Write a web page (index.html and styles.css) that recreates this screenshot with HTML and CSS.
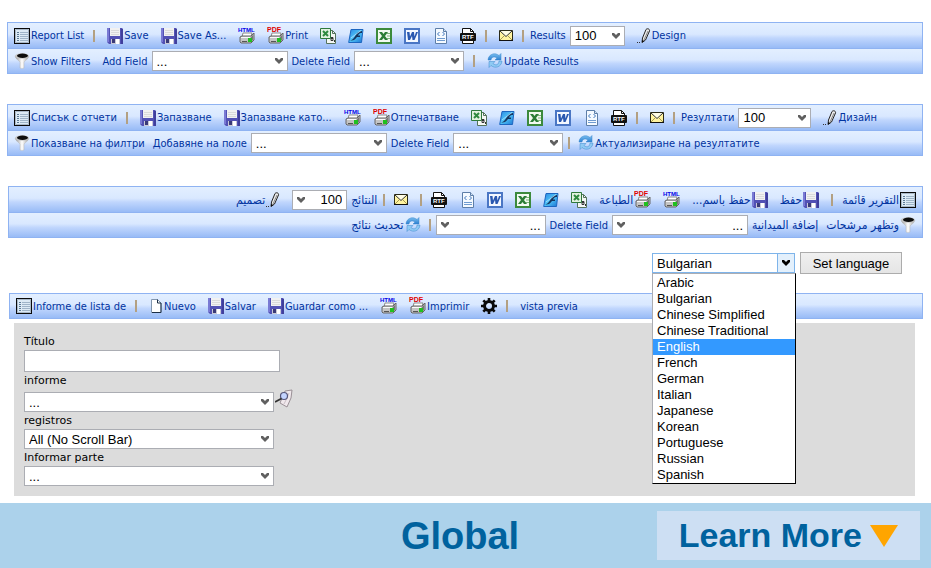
FILE: index.html
```html
<!DOCTYPE html>
<html lang="en">
<head>
<meta charset="utf-8">
<title>Global</title>
<link rel="stylesheet" href="styles.css">
</head>
<body>
<svg class="sprite" aria-hidden="true">
  <defs>
    <linearGradient id="g-refresh" x1="0" y1="0" x2="0" y2="1"><stop offset="0" stop-color="#7cc0f0"/><stop offset="1" stop-color="#2a7fd0"/></linearGradient>
    <linearGradient id="g-blue" x1="0" y1="0" x2="1" y2="1"><stop offset="0" stop-color="#2a86e0"/><stop offset=".5" stop-color="#4fc3f7"/><stop offset="1" stop-color="#1a70d0"/></linearGradient>
    <linearGradient id="g-funnel" x1="0" y1="0" x2="1" y2="0"><stop offset="0" stop-color="#8c8c8c"/><stop offset=".5" stop-color="#fff"/><stop offset="1" stop-color="#9a9a9a"/></linearGradient>
  </defs>
  <symbol id="list" viewBox="0 0 16 16">
    <rect x=".5" y=".5" width="15" height="15" fill="#dceaf5" stroke="#0a0a0a"/>
    <path d="M1.500 1.500h13v13h-13z" fill="none" stroke="#a9b8c8"/>
    <path d="M3 4.500h2M3 6.500h2M3 8.500h2M3 10.500h2M3 12.500h2" stroke="#5d7a96"/>
    <path d="M6 4.500h8M6 6.500h8M6 8.500h8M6 10.500h8M6 12.500h8" stroke="#9fb4c8"/>
  </symbol>
  <symbol id="floppy" viewBox="0 0 16 16">
    <path d="M0 0h15l1 1v15H2l-2-2z" fill="#5251b4"/>
    <path d="M0 0h2v14H0z" fill="#7a7ad4"/>
    <path d="M14 1h2v15h-2z" fill="#403f9c"/>
    <path d="M3 0h10v8H3z" fill="#f1f1f1"/>
    <path d="M4 2.500h8M4 4.500h8M4 6.500h8" stroke="#dadada"/>
    <path d="M4 11h9v5H4z" fill="#c9c9d6"/>
    <path d="M5 11h3v4H5z" fill="#3a3a78"/>
    <path d="M9 11h3v5H9z" fill="#fff"/>
  </symbol>
  <symbol id="print-html" viewBox="0 0 17 20">
    <path d="M5 7h9l-1 4H4z" fill="#fff" stroke="#8a8a8a"/>
    <path d="M2 11l2-1h9l3-3v7l-3 3H3l-1-1z" fill="#c4c4c4" stroke="#666"/>
    <path d="M3 11.500h9" stroke="#fafafa"/>
    <path d="M13 11l2-2v5l-2 2z" fill="#777"/>
    <path d="M4 15.500h5" stroke="#555"/>
    <path d="M10 12h4v4h-4z" fill="#1fc01f"/>
    <text class="tag tag-html" x="0" y="6">HTML</text>
  </symbol>
  <symbol id="print-pdf" viewBox="0 0 17 20">
    <path d="M5 7h9l-1 4H4z" fill="#fff" stroke="#8a8a8a"/>
    <path d="M2 11l2-1h9l3-3v7l-3 3H3l-1-1z" fill="#c4c4c4" stroke="#666"/>
    <path d="M3 11.500h9" stroke="#fafafa"/>
    <path d="M13 11l2-2v5l-2 2z" fill="#777"/>
    <path d="M4 15.500h5" stroke="#555"/>
    <path d="M10 12h4v4h-4z" fill="#1fc01f"/>
    <text class="tag tag-pdf" x="0" y="6">PDF</text>
  </symbol>
  <symbol id="csv" viewBox="0 0 16 16">
    <path d="M6.500 2.500h6l3 3v10h-9z" fill="#f5f8f5" stroke="#54735c"/>
    <path d="M12.500 2.500v3h3" fill="none" stroke="#54735c"/>
    <path d="M.5.500h10v10H.5z" fill="#e3f2e0" stroke="#2f7a3c"/>
    <path d="M3 3l5 5M8 3L3 8" stroke="#2f8a3e" stroke-width="2"/>
    <path d="M11 9.500h2v3h-2v-2h2M14.500 12v2" fill="none" stroke="#333"/>
  </symbol>
  <symbol id="flash" viewBox="0 0 16 16">
    <path d="M3 1.500h12l-1.500 13H.7z" fill="url(#g-blue)" stroke="#1c66c0"/>
    <path d="M14 3C9 3.500 8.500 6 7 8.500S4 12 2 12.500c4 .5 5.500-1.500 7-3.500h3V7.500h-2C11 5.500 12 5 14 5z" fill="#16365f"/>
    <path d="M3 10L13 2.500" stroke="#b9e6ff" stroke-width=".8"/>
  </symbol>
  <symbol id="excel" viewBox="0 0 16 16">
    <path d="M1 1h14v14H1z" fill="#f2faf0" stroke="#3c8a3c" stroke-width="2"/>
    <path d="M11 5.500h3M11 8h3M11 10.500h3" stroke="#7fb57b"/>
    <path d="M3 4h3l6 8H9zM9 4h3l-6 8H3z" fill="#2c7d35"/>
  </symbol>
  <symbol id="word" viewBox="0 0 16 16">
    <path d="M1 1h14v14H1z" fill="#f4f8ff" stroke="#4a76c4" stroke-width="2"/>
    <path d="M3 4h2.500l.5 4.500L8 4h2l.5 4.500L12 4h2l-3.500 8h-2L8 8l-2 4H4z" fill="#2a58b0"/>
  </symbol>
  <symbol id="xml" viewBox="0 0 16 16">
    <path d="M3.500.500h8l3 3v12h-11z" fill="#f5faff" stroke="#5d7ea8"/>
    <path d="M11.500.500v3h3" fill="#cfe0f2" stroke="#5d7ea8"/>
    <path d="M7.500 4l-2 2 2 2M10.500 4l2 2-2 2" fill="none" stroke="#3d75bd"/>
    <path d="M5 10.500h8M5 12.500h8" stroke="#6f9bd0"/>
  </symbol>
  <symbol id="rtf" viewBox="0 0 16 16">
    <path d="M2.500 6V.500h8l3 3V6M2.500 12v3.500h11V12" fill="#fff" stroke="#111"/>
    <path d="M10.500.500v3h3" fill="none" stroke="#111"/>
    <rect x="0" y="5" width="16" height="8" rx="1" fill="#111"/>
    <text class="tag tag-rtf" x="2" y="11">RTF</text>
  </symbol>
  <symbol id="mail" viewBox="0 0 14 16">
    <path d="M.5 2.500h13v10H.5z" fill="#fff3a0" stroke="#2a2a18"/>
    <path d="M1 12l4-4M13 12L9 8" stroke="#a59a50"/>
    <path d="M1 3l6 5.500L13 3" fill="#fffde6" stroke="#333"/>
    <path d="M0 12.500h14" stroke="#111"/>
  </symbol>
  <symbol id="pencil" viewBox="0 0 14 16">
    <path d="M9 1.500c1.500-1.500 4-.5 3.500 1.500L8.500 12 5 14.500 5.500 10z" fill="#ececec" stroke="#222"/>
    <path d="M11 3L7 12" stroke="#888"/>
    <path d="M5 12v2.500L7.500 13z" fill="#111"/>
    <path d="M0 14.500h1M2 14.500h1" stroke="#333"/>
  </symbol>
  <symbol id="funnel" viewBox="0 0 16 16">
    <path d="M1 3C2 7 5.500 7 6 9.500V15q2 1 4 0V9.500C10.500 7 14 7 15 3z" fill="url(#g-funnel)" stroke="#b0b0b0" stroke-width=".4"/>
    <ellipse cx="8" cy="3" rx="7" ry="2.800" fill="#c8c8c8"/>
    <ellipse cx="8.500" cy="2.800" rx="5.500" ry="2.200" fill="#0d0d0d"/>
  </symbol>
  <symbol id="refresh" viewBox="0 0 16 16">
    <path d="M1 7C1.500 1 8-1 12 2.500l2-2V7H8l2-2C7 3 4.500 4 4 7z" fill="url(#g-refresh)" stroke="#3a87cc" stroke-width=".5"/>
    <path d="M15 8c-.5 6-7 8-11 4.500l-2 2V8.500h6l-2 2C9 13 11.500 12 12 8z" fill="#8fcaf3" stroke="#3a87cc" stroke-width=".5"/>
  </symbol>
  <symbol id="page" viewBox="0 0 12 16">
    <path d="M1.500 1.500h6L11 5v9.500H1.500z" fill="#fff" stroke="#8296ae"/>
    <path d="M7.500 1.500V5H11M11 5v9.500H2" fill="none" stroke="#1b2e45"/>
  </symbol>
  <symbol id="gear" viewBox="0 0 16 16">
    <circle cx="8" cy="8" r="4.500" fill="none" stroke="#0a0a0a" stroke-width="3"/>
    <path d="M8 0v3M8 13v3M0 8h3M13 8h3M2.300 2.300l2.200 2.200M11.500 11.500l2.200 2.200M13.700 2.300l-2.200 2.200M4.500 11.500l-2.200 2.200" stroke="#0a0a0a" stroke-width="2.600"/>
  </symbol>
  <symbol id="preview" viewBox="0 0 18 20">
    <path d="M10 2l7-1-1 8-4 9-7-4z" fill="#f0e8ec" stroke="#9a9096"/>
    <path d="M14 4l-2 5-3 6" fill="none" stroke="#cbbfc6"/>
    <circle cx="9" cy="7" r="3.500" fill="#c4d4ff" stroke="#55557a" stroke-width="1.200"/>
    <path d="M6.500 9.500L0 13" stroke="#333" stroke-width="1.800"/>
  </symbol>
</svg>

<main class="page">
  <section class="toolbar" aria-label="English toolbar">
    <div class="row">
      <a class="item" href="#"><svg class="icon"><use href="#list"/></svg>Report List</a>
      <span class="sep"></span>
      <a class="item" href="#"><svg class="icon"><use href="#floppy"/></svg>Save</a>
      <a class="item" href="#"><svg class="icon"><use href="#floppy"/></svg>Save As...</a>
      <a class="item" href="#"><svg class="icon tall"><use href="#print-html"/></svg></a>
      <a class="item" href="#"><svg class="icon tall"><use href="#print-pdf"/></svg>Print</a>
      <a class="item" href="#"><svg class="icon"><use href="#csv"/></svg></a>
      <a class="item" href="#"><svg class="icon"><use href="#flash"/></svg></a>
      <a class="item" href="#"><svg class="icon"><use href="#excel"/></svg></a>
      <a class="item" href="#"><svg class="icon"><use href="#word"/></svg></a>
      <a class="item" href="#"><svg class="icon"><use href="#xml"/></svg></a>
      <a class="item" href="#"><svg class="icon"><use href="#rtf"/></svg></a>
      <span class="sep"></span>
      <a class="item" href="#"><svg class="icon narrow"><use href="#mail"/></svg></a>
      <span class="sep"></span>
      <span class="field after-sep"><label for="en-results">Results</label><select id="en-results" class="select count"><option>100</option></select></span>
      <a class="item" href="#"><svg class="icon narrow"><use href="#pencil"/></svg>Design</a>
    </div>
    <div class="row">
      <a class="item" href="#"><svg class="icon"><use href="#funnel"/></svg>Show Filters</a>
      <span class="field"><label for="en-add">Add Field</label><select id="en-add" class="select wide"><option>...</option></select>
      <label for="en-del">Delete Field</label><select id="en-del" class="select"><option>...</option></select></span>
      <span class="sep"></span>
      <a class="item" href="#"><svg class="icon"><use href="#refresh"/></svg>Update Results</a>
    </div>
  </section>

  <section class="toolbar" lang="bg" aria-label="Bulgarian toolbar">
    <div class="row">
      <a class="item" href="#"><svg class="icon"><use href="#list"/></svg>Списък с отчети</a>
      <span class="sep"></span>
      <a class="item" href="#"><svg class="icon"><use href="#floppy"/></svg>Запазване</a>
      <a class="item" href="#"><svg class="icon"><use href="#floppy"/></svg>Запазване като...</a>
      <a class="item" href="#"><svg class="icon tall"><use href="#print-html"/></svg></a>
      <a class="item" href="#"><svg class="icon tall"><use href="#print-pdf"/></svg>Отпечатване</a>
      <a class="item" href="#"><svg class="icon"><use href="#csv"/></svg></a>
      <a class="item" href="#"><svg class="icon"><use href="#flash"/></svg></a>
      <a class="item" href="#"><svg class="icon"><use href="#excel"/></svg></a>
      <a class="item" href="#"><svg class="icon"><use href="#word"/></svg></a>
      <a class="item" href="#"><svg class="icon"><use href="#xml"/></svg></a>
      <a class="item" href="#"><svg class="icon"><use href="#rtf"/></svg></a>
      <span class="sep"></span>
      <a class="item" href="#"><svg class="icon narrow"><use href="#mail"/></svg></a>
      <span class="sep"></span>
      <span class="field after-sep"><label for="bg-results">Резултати</label><select id="bg-results" class="select count roomy"><option>100</option></select></span>
      <a class="item" href="#"><svg class="icon narrow"><use href="#pencil"/></svg>Дизайн</a>
    </div>
    <div class="row compact">
      <a class="item" href="#"><svg class="icon"><use href="#funnel"/></svg>Показване на филтри</a>
      <span class="field"><label for="bg-add">Добавяне на поле</label><select id="bg-add" class="select wide"><option>...</option></select>
      <label for="bg-del">Delete Field</label><select id="bg-del" class="select"><option>...</option></select></span>
      <span class="sep"></span>
      <a class="item" href="#"><svg class="icon"><use href="#refresh"/></svg>Актуализиране на резултатите</a>
    </div>
  </section>

  <section class="toolbar" lang="ar" dir="rtl" aria-label="Arabic toolbar">
    <div class="row">
      <a class="item" href="#"><svg class="icon"><use href="#list"/></svg>التقرير قائمة</a>
      <span class="sep"></span>
      <a class="item" href="#"><svg class="icon"><use href="#floppy"/></svg>حفظ</a>
      <a class="item" href="#"><svg class="icon"><use href="#floppy"/></svg>حفظ باسم...</a>
      <a class="item" href="#"><svg class="icon tall"><use href="#print-html"/></svg></a>
      <a class="item" href="#"><svg class="icon tall"><use href="#print-pdf"/></svg>الطباعة</a>
      <a class="item" href="#"><svg class="icon"><use href="#csv"/></svg></a>
      <a class="item" href="#"><svg class="icon"><use href="#flash"/></svg></a>
      <a class="item" href="#"><svg class="icon"><use href="#excel"/></svg></a>
      <a class="item" href="#"><svg class="icon"><use href="#word"/></svg></a>
      <a class="item" href="#"><svg class="icon"><use href="#xml"/></svg></a>
      <a class="item" href="#"><svg class="icon"><use href="#rtf"/></svg></a>
      <span class="sep"></span>
      <a class="item" href="#"><svg class="icon narrow"><use href="#mail"/></svg></a>
      <span class="sep"></span>
      <span class="field after-sep"><label for="ar-results">النتائج</label><select id="ar-results" class="select count"><option>100</option></select></span>
      <a class="item" href="#"><svg class="icon narrow"><use href="#pencil"/></svg>تصميم</a>
    </div>
    <div class="row compact">
      <a class="item" href="#"><svg class="icon"><use href="#funnel"/></svg>وتظهر مرشحات</a>
      <span class="field"><label for="ar-add">إضافة الميدانية</label><select id="ar-add" class="select wide"><option>...</option></select>
      <label for="ar-del" class="latin" lang="en">Delete Field</label><select id="ar-del" class="select"><option>...</option></select></span>
      <span class="sep"></span>
      <a class="item" href="#"><svg class="icon"><use href="#refresh"/></svg>تحديث نتائج</a>
    </div>
  </section>

  <div class="language">
    <div class="picker">
      <select class="select active" aria-label="Language"><option>Bulgarian</option></select>
      <ul class="menu" role="listbox" aria-label="Languages">
        <li role="option">Arabic</li>
        <li role="option">Bulgarian</li>
        <li role="option">Chinese Simplified</li>
        <li role="option">Chinese Traditional</li>
        <li role="option" class="chosen" aria-selected="true">English</li>
        <li role="option">French</li>
        <li role="option">German</li>
        <li role="option">Italian</li>
        <li role="option">Japanese</li>
        <li role="option">Korean</li>
        <li role="option">Portuguese</li>
        <li role="option">Russian</li>
        <li role="option">Spanish</li>
      </ul>
    </div>
    <button class="set" type="button">Set language</button>
  </div>

  <section class="toolbar designer" lang="es" aria-label="Spanish toolbar">
    <div class="row">
      <a class="item" href="#"><svg class="icon"><use href="#list"/></svg>Informe de lista de</a>
      <span class="sep"></span>
      <a class="item" href="#"><svg class="icon narrow"><use href="#page"/></svg>Nuevo</a>
      <a class="item" href="#"><svg class="icon"><use href="#floppy"/></svg>Salvar</a>
      <a class="item" href="#"><svg class="icon"><use href="#floppy"/></svg>Guardar como ...</a>
      <a class="item" href="#"><svg class="icon tall"><use href="#print-html"/></svg></a>
      <a class="item" href="#"><svg class="icon tall"><use href="#print-pdf"/></svg>Imprimir</a>
      <a class="item" href="#"><svg class="icon"><use href="#gear"/></svg></a>
      <span class="sep"></span>
      <a class="item" href="#">vista previa</a>
    </div>
  </section>

  <form class="form" lang="es">
    <label for="titulo">Título</label>
    <input id="titulo" class="text" type="text">
    <label for="informe">informe</label>
    <div class="with-icon">
      <select id="informe" class="select"><option>...</option></select>
      <svg class="preview"><use href="#preview"/></svg>
    </div>
    <label for="registros">registros</label>
    <select id="registros" class="select"><option>All (No Scroll Bar)</option></select>
    <label for="parte">Informar parte</label>
    <select id="parte" class="select"><option>...</option></select>
  </form>
</main>

<footer class="footer">
  <h1 class="title">Global</h1>
  <a class="more" href="#">Learn More<svg class="arrow" viewBox="0 0 28 22"><path d="M0 0h28L14 22z" fill="#ffa500"/></svg></a>
</footer>
</body>
</html>
```
FILE: styles.css
```css
* {
  box-sizing: border-box;
}

body {
  margin: 0;
  background: #fff;
  color: #000;
  font-family: "Liberation Sans", Arial, sans-serif;
  font-size: 13px;
}

.sprite {
  position: absolute;
  width: 20px;
  height: 20px;
  visibility: hidden;
}

.page {
  padding: 22px 8px 7px 7px;
}

/* Toolbars */
.toolbar {
  margin-bottom: 30px;
  border: solid #8fb3f2;
  border-width: 0 1px;
  color: #0033a0;
  font-family: "DejaVu Sans Condensed", "DejaVu Sans", Tahoma, sans-serif;
  font-size: 11px;
}

.toolbar[dir="rtl"] {
  margin: 0 0 14px 1px;
  font-size: 12px;
}

.toolbar.designer {
  margin: 19px 0 4px 2px;
}

.latin {
  font-size: 11px;
}

.row {
  display: flex;
  align-items: center;
  gap: 12px;
  height: 26px;
  padding: 0 6px;
  border-top: 1px solid #8fb3f2;
  background: linear-gradient(#e3efff, #d9e8ff 45%, #c0d6fd 60%, #98bbf6);
  white-space: nowrap;
}

.row:last-child {
  border-bottom: 1px solid #8fb3f2;
}

.row.compact {
  gap: 8px;
}

.item {
  display: flex;
  align-items: center;
  gap: 1px;
  color: inherit;
  text-decoration: none;
}

.field {
  display: flex;
  align-items: center;
  gap: 4px;
}

.sep {
  width: 2px;
  height: 12px;
  margin-inline-start: -3px;
  background: #b3a082;
}

.after-sep {
  margin-inline-start: -6px;
}

.icon {
  width: 16px;
  height: 16px;
  direction: ltr;
}

.icon.tall {
  width: 17px;
  height: 20px;
}

.icon.narrow {
  width: 14px;
}

.tag {
  font-family: "Liberation Sans", Arial, sans-serif;
  font-size: 6px;
  font-weight: bold;
}

.tag-html {
  fill: #0000e6;
}

.tag-pdf {
  fill: #e00000;
  font-size: 7px;
}

.tag-rtf {
  fill: #fff;
}

/* Form controls */
.select {
  appearance: none;
  width: 110px;
  height: 20px;
  padding: 0 4px;
  border: 1px solid #abadb3;
  border-radius: 0;
  background: #fff url("data:image/svg+xml,%3Csvg xmlns='http://www.w3.org/2000/svg' width='8' height='6'%3E%3Cpath d='M0 0h2l2 2 2-2h2v2L4 6 0 2z' fill='%23606060'/%3E%3C/svg%3E") no-repeat right 4px center;
  color: #000;
  font: 13px "Liberation Sans", Arial, sans-serif;
}

[dir="rtl"] .select {
  background-position: left 4px center;
}

.select.wide {
  width: 136px;
}

.select.count {
  width: 55px;
}

.select.roomy {
  width: 73px;
}

/* Language picker */
.language {
  display: flex;
  justify-content: flex-end;
  align-items: center;
  gap: 5px;
  padding-right: 21px;
}

.picker {
  position: relative;
  width: 143px;
}

.select.active {
  display: block;
  width: 100%;
  border-color: #7eb4ea;
  background: url("data:image/svg+xml,%3Csvg xmlns='http://www.w3.org/2000/svg' width='17' height='18'%3E%3Cpath d='M0 0h17v18H0z' fill='%23e3f0fc'/%3E%3Cpath d='M.5 0v18' stroke='%237eb4ea'/%3E%3Cpath d='M5 6h2l2 2 2-2h2v2l-4 4-4-4z' fill='%23000'/%3E%3C/svg%3E") no-repeat right center #fff;
}

.menu {
  position: absolute;
  z-index: 1;
  top: 100%;
  left: 0;
  width: 144px;
  margin: 0;
  padding: 1px 0 0;
  border: 1px solid #000;
  border-top-color: #abadb3;
  border-left-color: #abadb3;
  background: #fff;
  list-style: none;
  line-height: 16px;
}

.menu li {
  padding: 0 4px;
}

.menu .chosen {
  background: #3399ff;
  color: #fff;
}

.set {
  width: 102px;
  height: 22px;
  padding: 0;
  border: 1px solid #acacac;
  background: linear-gradient(#f0f0f0, #e5e5e5);
  color: #000;
  font: 13px "Liberation Sans", Arial, sans-serif;
}

/* Report form */
.form {
  display: flex;
  flex-direction: column;
  align-items: flex-start;
  margin: 0 8px 0 7px;
  padding: 10px;
  background: #dcdcdc;
  font: 11px/17px "DejaVu Sans", Verdana, sans-serif;
}

.form .select {
  width: 250px;
}

.text {
  width: 256px;
  height: 22px;
  border: 1px solid #abadb3;
  background: #fff;
}

.with-icon {
  display: flex;
  align-items: flex-end;
  gap: 1px;
  height: 23px;
}

.preview {
  align-self: flex-start;
  width: 18px;
  height: 20px;
}

/* Banner */
.footer {
  display: grid;
  grid-template-columns: 1fr auto 1fr;
  align-items: center;
  min-height: 65px;
  padding: 8px 11px 8px 0;
  background: #acd2eb;
  color: #00629e;
}

.title {
  grid-column: 2;
  margin: 0;
  font-size: 38px;
  line-height: 46px;
}

.more {
  display: flex;
  justify-self: end;
  align-items: center;
  gap: 8px;
  padding: 0 22px;
  background: #cddff3;
  color: inherit;
  font-size: 34px;
  font-weight: bold;
  line-height: 49px;
  text-decoration: none;
}

.arrow {
  width: 28px;
  height: 22px;
}
```
